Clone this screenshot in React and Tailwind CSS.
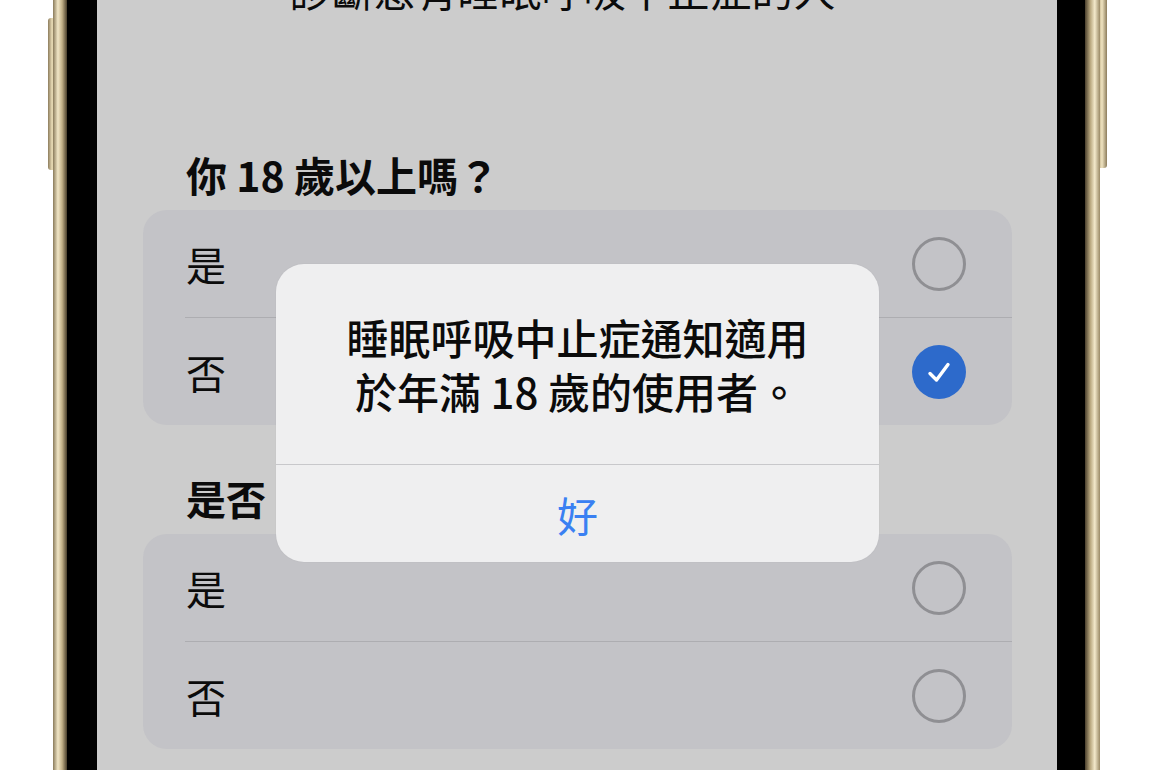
import React from "react";

const FONT = "font-['Noto_Sans_CJK_TC','Noto_Sans_CJK_SC',sans-serif]";

function Radio({ checked }) {
  if (checked) {
    return (
      <div className="w-[54px] h-[54px] rounded-full bg-[#2d6acb] flex items-center justify-center">
        <svg width="30" height="30" viewBox="0 0 30 30" fill="none">
          <path d="M6 16.5 L12.5 23 L24 7.5" stroke="#ffffff" strokeWidth="3.4" strokeLinecap="round" strokeLinejoin="round" />
        </svg>
      </div>
    );
  }
  return <div className="w-[54px] h-[54px] rounded-full border-[3px] border-[#8f8f93]" />;
}

function Row({ label, checked }) {
  return (
    <div className="h-[107px] flex items-center justify-between pl-[43px] pr-[46px]">
      <span className="text-[40px] leading-[56px] text-[#0b0b0b]">{label}</span>
      <Radio checked={checked} />
    </div>
  );
}

function Card({ checkedIndex }) {
  return (
    <div className="rounded-[24px] bg-[#c3c3c7] flex flex-col">
      <Row label="是" checked={checkedIndex === 0} />
      <div className="ml-[42px] h-px bg-[#adadb1]" />
      <Row label="否" checked={checkedIndex === 1} />
    </div>
  );
}

export default function App() {
  return (
    <div className={`relative w-[1155px] h-[770px] bg-white overflow-hidden ${FONT}`}>
      {/* side buttons */}
      <div className="absolute left-[48px] top-[18px] w-[9px] h-[152px] rounded-l-[3px] bg-[linear-gradient(to_right,#8c7c5c,#e9dcb6_45%,#a8976f)]" />
      <div className="absolute left-[1097px] top-[-10px] w-[10px] h-[178px] rounded-r-[3px] bg-[linear-gradient(to_right,#a8976f,#efe3c0_50%,#8c7c5c)]" />

      <div className="relative ml-[53px] w-[1047px] h-full flex">
        <div className="w-[14px] h-full bg-[linear-gradient(to_right,#8a7b5b,#f1e6c6_35%,#c2b088_65%,#4a3f2c)]" />
        <div className="w-[30px] h-full bg-black" />
        <div className="relative w-[960px] h-full bg-[#cccccc] overflow-hidden">
          <div className="flex flex-col pl-[46px] pr-[45px]">
            <div className="mt-[-39px] pr-[30px] text-center text-[42px] leading-[56px] text-[#0b0b0b]">
              診斷患有睡眠呼吸中止症的人
            </div>
            <div className="mt-[129px] pl-[43px] text-[41px] leading-[56px] font-bold text-[#0b0b0b]">
              你 18 歲以上嗎？
            </div>
            <div className="mt-[8px]">
              <Card checkedIndex={1} />
            </div>
            <div className="mt-[45px] pl-[43px] text-[40px] leading-[56px] font-bold text-[#0b0b0b] whitespace-nowrap">
              是否
            </div>
            <div className="mt-[8px]">
              <Card checkedIndex={-1} />
            </div>
          </div>

          {/* alert */}
          <div className="absolute left-[179px] top-[264px] w-[603px] h-[298px] rounded-[28px] bg-[#efeff0] flex flex-col overflow-hidden shadow-[0_0_2px_rgba(0,0,0,0.05)]">
            <div className="h-[200px] flex flex-col items-center justify-center text-[42px] leading-[54px] font-medium text-[#0b0b0b]">
              <div>睡眠呼吸中止症通知適用</div>
              <div>於年滿 18 歲的使用者。</div>
            </div>
            <div className="h-px bg-[#c8c8cb]" />
            <div className="flex-1 flex items-center justify-center text-[41px] leading-[54px] text-[#3a80f2]">
              好
            </div>
          </div>
        </div>
        <div className="w-[28px] h-full bg-black" />
        <div className="w-[15px] h-full bg-[linear-gradient(to_right,#4a3f2c,#b8a77e_35%,#f3e9cb_65%,#9a8a66)]" />
      </div>
    </div>
  );
}
